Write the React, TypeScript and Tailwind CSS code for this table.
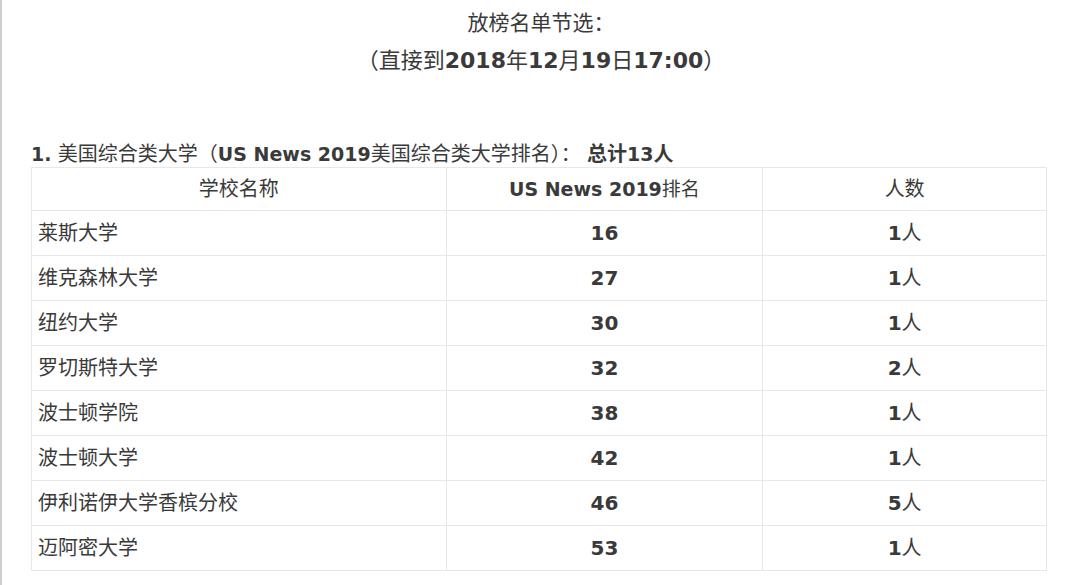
const rows = [
  { name: '莱斯大学', rank: '16', count: '1' },
  { name: '维克森林大学', rank: '27', count: '1' },
  { name: '纽约大学', rank: '30', count: '1' },
  { name: '罗切斯特大学', rank: '32', count: '2' },
  { name: '波士顿学院', rank: '38', count: '1' },
  { name: '波士顿大学', rank: '42', count: '1' },
  { name: '伊利诺伊大学香槟分校', rank: '46', count: '5' },
  { name: '迈阿密大学', rank: '53', count: '1' },
]

export default function App() {
  return (
    <div className="w-[1080px] h-[585px] overflow-hidden bg-white border-l-2 border-[#cfcfcf] font-['DejaVu_Sans','Noto_Sans_CJK_SC',sans-serif] text-[#3a3a3a]">
      <div className="pt-[4px] text-center leading-[38px]">
        <p className="text-[21px]">放榜名单节选：</p>
        <p className="text-[22px]">
          （直接到<b>2018</b>年<b>12</b>月<b>19</b>日<b>17:00</b>）
        </p>
      </div>

      <p className="mt-[61px] ml-[29px] text-[20px] leading-[26px] whitespace-pre">
        <b className="text-[19px]">1.</b> 美国综合类大学（<b className="text-[19px]">US News 2019</b>美国综合类大学排名）： <b>总计<span className="text-[19px]">13</span>人</b>
      </p>

      <table className="ml-[29px] w-[1016px] border-collapse text-[20px]">
        <colgroup>
          <col className="w-[415px]" />
          <col className="w-[317px]" />
          <col className="w-[284px]" />
        </colgroup>
        <thead>
          <tr className="h-[43px]">
            <th className="border border-[#e6e8ea] font-normal">学校名称</th>
            <th className="border border-[#e6e8ea] text-[19px]">US News 2019<span className="font-normal">排名</span></th>
            <th className="border border-[#e6e8ea] font-normal">人数</th>
          </tr>
        </thead>
        <tbody>
          {rows.map((r) => (
            <tr key={r.name} className="h-[45px]">
              <td className="border border-[#e6e8ea] px-[6px]">{r.name}</td>
              <td className="border border-[#e6e8ea] text-center font-bold">{r.rank}</td>
              <td className="border border-[#e6e8ea] text-center">
                <b>{r.count}</b>人
              </td>
            </tr>
          ))}
        </tbody>
      </table>
    </div>
  )
}
